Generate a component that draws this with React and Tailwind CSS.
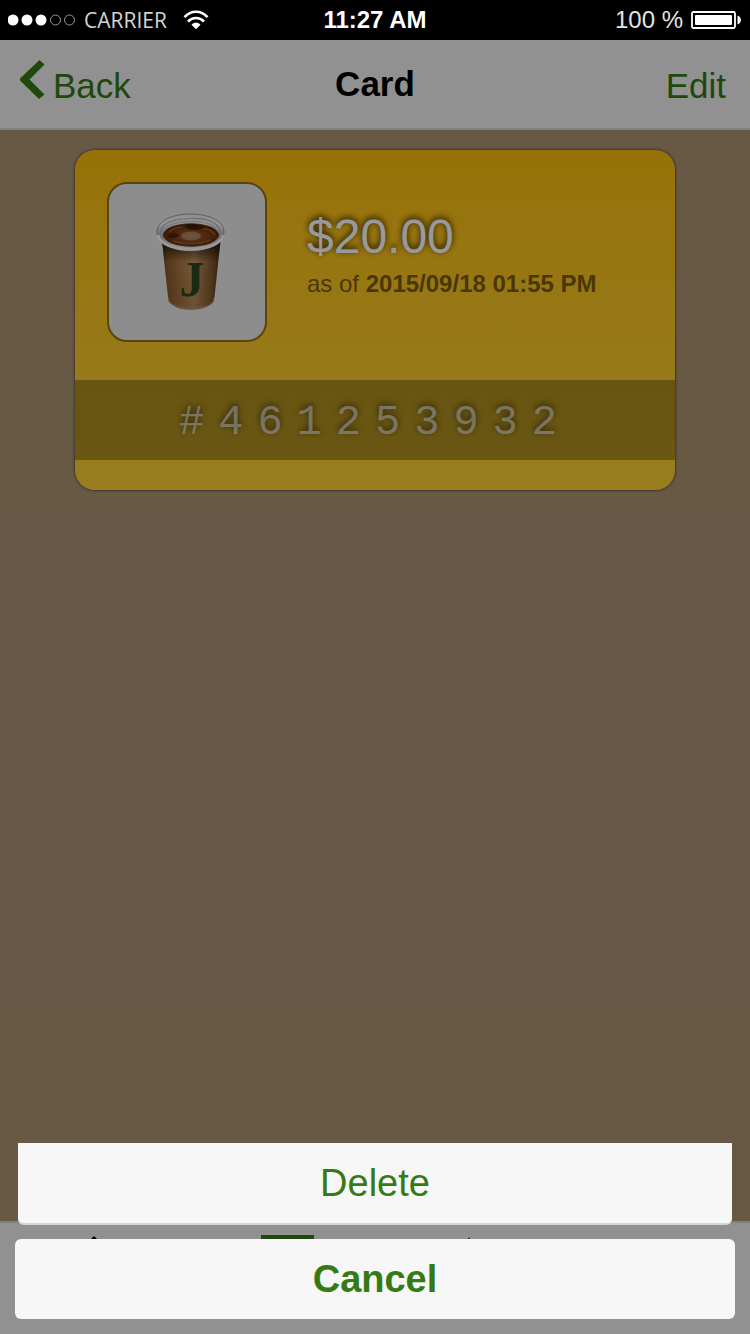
function StatusBar() {
  return (
    <div className="grid h-10 grid-cols-3 items-center bg-black px-2 text-white">
      <div className="flex items-center gap-2">
        <svg className="h-4 w-17" viewBox="0 0 68 16" aria-hidden="true">
          <circle cx="5" cy="8" r="5.5" fill="#fff" />
          <circle cx="19" cy="8" r="5.5" fill="#fff" />
          <circle cx="33" cy="8" r="5.5" fill="#fff" />
          <circle cx="47.500" cy="8" r="5" fill="none" stroke="#999" />
          <circle cx="61.500" cy="8" r="5" fill="none" stroke="#999" />
        </svg>
        <span className="font-['Open_Sans','Noto_Sans',sans-serif] text-[21px] leading-10 text-[#d4d4d4]">CARRIER</span>
        <svg className="ml-2 h-5 w-[26px]" viewBox="0 0 26 20" aria-hidden="true">
          <g fill="none" stroke="#fff" strokeWidth="2.600">
            <path d="M1.500 7.200C8 0 18 0 24.500 7.200" />
            <path d="M5 11.500C9.500 6.800 16.500 6.800 21 11.500" />
          </g>
          <path d="M8.500 14.800C11 12.200 15 12.200 17.500 14.800L13 19.200Z" fill="#fff" />
        </svg>
      </div>
      <div className="text-center text-2xl leading-10 font-bold">11:27 AM</div>
      <div className="flex items-center justify-end gap-2">
        <span className="text-2xl leading-10 text-[#e4e4e4]">100 %</span>
        <svg className="h-[18px] w-[51px]" viewBox="0 0 51 18" aria-hidden="true">
          <rect x="1" y="1" width="43" height="16" rx="1.500" fill="none" stroke="#fff" strokeWidth="1.800" />
          <rect x="4" y="4" width="37" height="10" rx="1" fill="#fff" />
          <path d="M46.500 4.500C51 6 51 12 46.500 13.500Z" fill="#fff" />
        </svg>
      </div>
    </div>
  );
}

function CoffeeCup() {
  return (
    <svg className="size-full" viewBox="0 0 156 156" role="img" aria-label="Coffee cup">
      <defs>
        <linearGradient id="sleeve" x1="0" x2="1" y1="0" y2="0">
          <stop offset="0" stopColor="#5a3d22" />
          <stop offset="0.100" stopColor="#8d602f" />
          <stop offset="0.350" stopColor="#b27d46" />
          <stop offset="0.550" stopColor="#c39663" />
          <stop offset="0.850" stopColor="#85592f" />
          <stop offset="1" stopColor="#4c3019" />
        </linearGradient>
        <linearGradient id="shade" x1="0" x2="0" y1="0" y2="1">
          <stop offset="0.100" stopColor="#1d1006" stopOpacity="0.800" />
          <stop offset="0.350" stopColor="#1d1006" stopOpacity="0" />
          <stop offset="0.900" stopColor="#3b2412" stopOpacity="0.100" />
          <stop offset="1" stopColor="#f2c489" stopOpacity="0.450" />
        </linearGradient>
        <linearGradient id="wall" x1="0" x2="0" y1="0" y2="1">
          <stop offset="0" stopColor="#ececec" />
          <stop offset="0.250" stopColor="#f8f8f8" />
          <stop offset="0.600" stopColor="#b5b5b5" />
          <stop offset="1" stopColor="#ffffff" />
        </linearGradient>
        <radialGradient id="coffee" cx="0.500" cy="0.550" r="0.550">
          <stop offset="0" stopColor="#a8714c" />
          <stop offset="0.450" stopColor="#84451c" />
          <stop offset="0.850" stopColor="#6d300b" />
          <stop offset="1" stopColor="#351606" />
        </radialGradient>
      </defs>
      <path d="M52.500 52L59 113C60 121 69 126 82 126S104 121 105.500 113L112 52Z" fill="url(#sleeve)" />
      <path d="M52.500 52L59 113C60 121 69 126 82 126S104 121 105.500 113L112 52Z" fill="url(#shade)" />
      <path d="M59.500 116C64 127 101 127 105 116" fill="none" stroke="#a9865c" strokeWidth="1.200" />
      <path d="M48 48C48 37 63 30 81.500 30S115 37 115 48C115 60 98 67 81.500 67S48 60 48 48Z" fill="url(#wall)" stroke="#8d8d8d" strokeWidth="0.800" />
      <path d="M52 50C51 41 60 35 81.500 34.500S112 41 111 50" fill="none" stroke="#b3b3b3" strokeWidth="1.200" />
      <path d="M54 48C56 41 66 38 81.500 37.500S107 41 109 48" fill="none" stroke="#d0d0d0" strokeWidth="1.500" />
      <ellipse cx="82" cy="51" rx="27.500" ry="11.200" fill="url(#coffee)" stroke="#4b3020" strokeWidth="0.800" />
      <path d="M76 42C80 39.500 91 40 95 43C90 47 79 47 76 42Z" fill="#2a1005" opacity="0.650" />
      <path d="M58 53C62 47 67 49 71 51C67 54 64 55 58 53Z" fill="#2a1005" opacity="0.600" />
      <ellipse cx="82" cy="52" rx="10" ry="4.500" fill="#d2b7a2" opacity="0.450" />
      <path d="M60 48C65 43 70 44 73 43M95 45C101 45 104 48 106 51M64 57C72 60 91 61 101 56" fill="none" stroke="#a95720" strokeWidth="1.400" />
      <path d="M49 51C52 70 111 70 114 51" fill="none" stroke="#ffffff" strokeWidth="2.600" />
      <text x="83" y="112" textAnchor="middle" className="fill-[#284a22] font-['Liberation_Serif',serif] text-[50px] font-bold">J</text>
    </svg>
  );
}

function GiftCard() {
  return (
    <section className="mx-auto mt-5 w-4/5 overflow-hidden rounded-[20px] bg-linear-to-b from-[#fcbe0a] to-[#fdd234] pb-[30px] shadow-[0_0_3px_rgba(0,0,0,0.8)]">
      <div className="flex gap-10 px-8 pt-8 pb-[38px]">
        <div className="size-40 shrink-0 rounded-[20px] border-2 border-[#987210] bg-[#ececec]">
          <CoffeeCup />
        </div>
        <div className="pt-7">
          <p className="text-5xl leading-[54px] text-white [text-shadow:0_-2px_6px_rgba(0,0,0,0.9)]">$20.00</p>
          <p className="mt-1 text-2xl leading-8 text-[#7c5d0c]">
            as of <strong>2015/09/18 01:55 PM</strong>
          </p>
        </div>
      </div>
      <p className="bg-black/30 pt-1.5 text-center font-['Liberation_Mono',monospace] text-[42px] leading-[74px] tracking-[14px] text-white/60 [text-shadow:0_-2px_6px_rgba(0,0,0,0.6)]">
        #461253932
      </p>
    </section>
  );
}

function TabBar() {
  return (
    <nav className="grid h-[113px] grid-cols-4 border-t-2 border-[#d5d5d5] bg-[#f2f2f2] pt-3">
      <button type="button" aria-label="Home" className="flex justify-center">
        <svg className="size-14" viewBox="0 0 56 56"><path d="M28 1L54 27H47V53H34V36H22V53H9V27H2Z" fill="#000" /></svg>
      </button>
      <button type="button" aria-label="Cards" className="flex justify-center pl-3">
        <svg className="h-14 w-[53px]" viewBox="0 0 53 56"><path fillRule="evenodd" d="M0 0H53V38H0ZM5 11H48V18H5Z" fill="#357b14" /></svg>
      </button>
      <button type="button" aria-label="Favorites" className="flex justify-center">
        <svg className="size-14" viewBox="0 0 56 56"><path d="M28 2L35 20L54 21L39 33L44 52L28 41L12 52L17 33L2 21L21 20Z" fill="#000" /></svg>
      </button>
      <button type="button" aria-label="More" className="flex justify-center">
        <svg className="size-14" viewBox="0 0 56 56"><g fill="#000"><circle cx="10" cy="28" r="5" /><circle cx="28" cy="28" r="5" /><circle cx="46" cy="28" r="5" /></g></svg>
      </button>
    </nav>
  );
}

function ActionSheet() {
  return (
    <div role="dialog" aria-label="Card actions" className="absolute inset-x-0 bottom-0 flex flex-col gap-3.5 px-[15px] pb-[15px] text-[38px] text-[#357b14]">
      <button type="button" className="mx-[3px] rounded-b-md border-b-2 border-[#d5d5d5] bg-[#f7f7f7] leading-20">Delete</button>
      <button type="button" className="rounded-md bg-[#f7f7f7] leading-20 font-bold">Cancel</button>
    </div>
  );
}

export default function App() {
  return (
    <div className="flex min-h-screen flex-col font-['Liberation_Sans',Arial,sans-serif]">
      <StatusBar />
      <div className="relative flex flex-1 flex-col bg-[#ad9474]">
        <header className="grid h-[90px] grid-cols-3 items-center border-b-2 border-[#d5d5d5] bg-[#f2f2f2] px-5 pb-1 text-[35px] leading-[84px]">
          <button type="button" className="flex items-center gap-2 pt-1 text-[#357b14]">
            <svg className="mb-3 h-10 w-[25px]" viewBox="0 0 25 40" aria-hidden="true">
              <path d="M19.500 0L24.500 4.500L9.500 19.500L24.500 34.500L19 39L-1 19.500Z" fill="currentColor" />
            </svg>
            Back
          </button>
          <h1 className="text-center font-bold">Card</h1>
          <button type="button" className="justify-self-end pt-1 pr-1 text-[#357b14]">Edit</button>
        </header>
        <main className="flex-1">
          <GiftCard />
        </main>
        <TabBar />
        <div className="absolute inset-0 bg-black/40" />
        <ActionSheet />
      </div>
    </div>
  );
}
